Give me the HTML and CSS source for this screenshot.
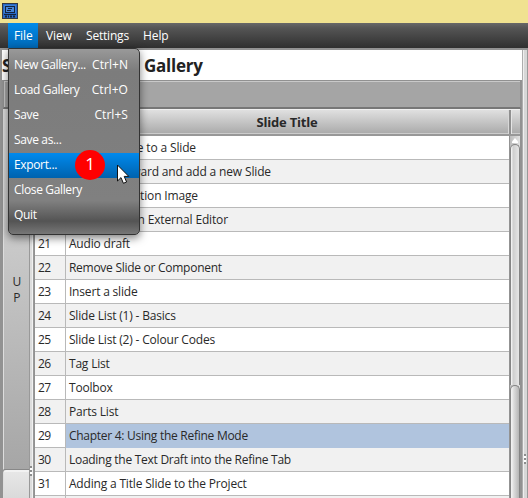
FILE: index.html
```html
<!DOCTYPE html>
<html lang="en">
<head>
<meta charset="utf-8">
<title>Slide Gallery</title>
<link rel="stylesheet" href="styles.css">
</head>
<body>
<div class="window">
  <header class="titlebar">
    <svg class="app-icon" width="16" height="16" viewBox="0 0 16 16">
      <rect width="16" height="16" fill="#34383f"/>
      <rect x="1" y="1" width="14" height="14" fill="#2868c4"/>
      <rect x="2" y="2" width="12" height="8" fill="#3f80d4"/>
      <rect x="3.5" y="3.5" width="9" height="6" fill="#4584d8" stroke="#14233d"/>
      <path d="M6 5.5h4M5 7.5h4M2 11.5h12" stroke="#14233d"/>
      <path d="M3 13.5h2m1 0h1m1 0h2m1 0h2" stroke="#14233d" stroke-width="2"/>
    </svg>
  </header>
  <nav class="menubar">
    <span class="menu-title open">File</span><span class="menu-title m-view">View</span><span class="menu-title m-settings">Settings</span><span class="menu-title">Help</span>
  </nav>
  <main class="workspace">
    <section class="content">
      <h1><span class="initial">S</span><span>Gallery</span></h1>
      <div class="toolbar"></div>
      <div class="body">
        <aside class="tabs">
          <div class="tab tab-up"><span>U<br>P</span></div>
          <div class="tab tab-next"></div>
        </aside>
        <div class="splitter"><i class="grip"></i></div>
        <div class="table">
          <div class="table-head"><div class="head-number"></div><div class="head-title">Slide Title</div><div class="head-corner"></div></div>
          <div class="table-body">
            <div class="rows">
              <div class="row"><b></b><p><span class="end w17">e to a Slide</span></p></div>
              <div class="row"><b></b><p><span class="end w18">ward and add a new Slide</span></p></div>
              <div class="row"><b></b><p><span class="end w19">ption Image</span></p></div>
              <div class="row"><b></b><p><span class="end w20">n External Editor</span></p></div>
              <div class="row"><b>21</b><p>Audio draft</p></div>
              <div class="row"><b>22</b><p class="tight">Remove Slide or Component</p></div>
              <div class="row"><b>23</b><p>Insert a slide</p></div>
              <div class="row"><b>24</b><p>Slide List (1) - Basics</p></div>
              <div class="row"><b>25</b><p>Slide List (2) - Colour Codes</p></div>
              <div class="row"><b>26</b><p>Tag List</p></div>
              <div class="row"><b>27</b><p>Toolbox</p></div>
              <div class="row"><b>28</b><p>Parts List</p></div>
              <div class="row selected"><b>29</b><p class="tight">Chapter 4: Using the Refine Mode</p></div>
              <div class="row"><b>30</b><p class="tight">Loading the Text Draft into the Refine Tab</p></div>
              <div class="row"><b>31</b><p>Adding a Title Slide to the Project</p></div>
              <div class="row"><b></b><p></p></div>
            </div>
            <div class="scrollbar">
              <div class="arrow"><svg width="10" height="9" viewBox="0 0 10 9"><path d="M5 2L8 5.5V7H2V5.5Z" fill="#fff"/></svg></div>
              <div class="thumb"></div>
              <div class="thumb lower"></div>
            </div>
          </div>
        </div>
      </div>
    </section>
    <div class="right-splitter"><i class="grip"></i></div>
  </main>
  <div class="dropdown">
    <div class="item"><span>New Gallery...</span><span class="key">Ctrl+N</span></div>
    <div class="item"><span>Load Gallery</span><span class="key">Ctrl+O</span></div>
    <div class="item"><span>Save</span><span class="key">Ctrl+S</span></div>
    <div class="item"><span>Save as...</span></div>
    <div class="item active"><span>Export...</span></div>
    <div class="item"><span>Close Gallery</span></div>
    <div class="item"><span>Quit</span></div>
  </div>
  <div class="badge">1</div>
  <svg class="cursor" width="14" height="22" viewBox="0 0 14 22"><path d="M1.5 1V17L5 13.6L7.4 19.3L10.6 18L8.2 12.4H12.8Z" fill="#fff" stroke="#111" stroke-width="1"/></svg>
</div>
</body>
</html>
```

FILE: styles.css
```css
* { box-sizing: border-box; }
body { margin: 0; background: #939393; font: 12px/16px "Open Sans", "Noto Sans", sans-serif; color: #292929; overflow: hidden; }
.window { position: relative; width: 528px; height: 498px; overflow: hidden; display: flex; flex-direction: column; }
.titlebar { height: 23px; flex: none; background: #f0e290; padding: 3px 2px; }
.app-icon { display: block; }
.menubar { height: 25px; flex: none; display: flex; padding-left: 8px; background: linear-gradient(#686868, #555 20%, #303030); color: #fff; line-height: 26px; letter-spacing: -.1px; }
.menu-title { padding-left: 8px; white-space: nowrap; }
.open { width: 30px; padding-left: 6px; background: linear-gradient(#008bea, #0068b5); }
.m-view { width: 40px; }
.m-settings { width: 57px; letter-spacing: -.2px; }
.workspace { flex: 1; min-height: 0; display: flex; padding-top: 2px; }
.content { width: 522px; display: flex; flex-direction: column; }
h1 { margin: 0 0 0 2px; height: 30px; flex: none; display: flex; background: #fff; font-size: 17px; line-height: 32px; letter-spacing: -.25px; color: #222; }
.initial { width: 142px; }
.toolbar { height: 29px; flex: none; margin: 0 1px 0 3px; background: #a5a5a5; border: 1px solid #919191; border-bottom: 2px solid #777; box-shadow: inset 1px 1px #c9c9c9; }
.body { flex: 1; min-height: 0; display: flex; padding: 0 2px 0 3px; background: #929292; }
.tabs { width: 26px; display: flex; flex-direction: column; }
.tab { border-left: 1px solid #ddd; }
.tab-up { height: 361px; border-top: 1px solid #ddd; border-bottom: 1px solid #888; background: linear-gradient(#dedede, #a6a6a6); padding: 164px 0 0 1px; text-align: center; }
.tab-next { flex: 1; background: linear-gradient(#e7e7e7, #dadada); border-top: 2px solid #f2f2f2; border-radius: 3px 0 0; }
.splitter { width: 5px; background: linear-gradient(90deg, #999 0 20%, #ddd 20% 60%, #f1f1f1 60% 80%, #999 80%); display: flex; align-items: flex-end; padding: 0 0 22px 1px; }
.grip { width: 2px; height: 10px; background: repeating-linear-gradient(#8c8c8c 0 2px, #fff 2px 4px); }
.table { width: 486px; margin-left: 1px; display: flex; flex-direction: column; overflow: hidden; }
.table-head { height: 27px; flex: none; display: flex; border-top: 1px solid #f0f0f0; border-bottom: 2px solid #989898; background: linear-gradient(#e0e0e0, #a9a9a9); font-size: 13px; font-weight: 700; line-height: 25px; letter-spacing: -.2px; box-shadow: inset 0 -1px #ccc; }
.head-number { width: 31px; border-right: 1px solid #999; }
.head-title { width: 443px; text-align: center; border-right: 1px solid #d8d8d8; }
.head-corner { flex: 1; border-left: 2px solid #909090; box-shadow: inset 1px 0 #e5e5e5; }
.table-body { display: flex; }
.rows { width: 474px; flex: none; }
.row { height: 24px; display: flex; background: #fff; border-bottom: 1px solid #b9b9b9; line-height: 24px; }
.row:nth-child(even) { background: #f1f1f1; }
.row b { width: 31px; flex: none; padding-left: 3px; border-right: 1px solid #b9b9b9; font-weight: 400; letter-spacing: -.5px; }
.row p { margin: 0; flex: 1; padding-left: 3px; white-space: nowrap; letter-spacing: -.18px; }
.row .tight { letter-spacing: -.27px; }
.row.selected p { height: 24px; background: #b0c4de; }
.end { display: block; text-align: right; letter-spacing: -.15px; }
.w17 { width: 127px; }
.w18 { width: 202px; }
.w19 { width: 129px; }
.w20 { width: 159px; }
.scrollbar { flex: 1; height: 390px; border-left: 1px solid #939393; background: linear-gradient(90deg, #bcbcbc, #e2e2e2); border-right: 1px solid #999; }
.arrow { height: 8px; }
.arrow svg { display: block; }
.thumb { height: 241px; border: 1px solid #858585; border-radius: 5px 5px 0 0; background: linear-gradient(90deg, #f1f1f1 12%, #e2e2e2 25%, #b5b5b5); border-bottom: 0; }
.thumb:not(.lower) { background: linear-gradient(90deg, #f1f1f1 10%, #cecece 25%, #e6e6e6); }
.right-splitter { flex: 1; background: linear-gradient(90deg, #adadad 0 17%, #efefef 17% 38%, #d7d7d7 38% 83%, #999 83%); display: flex; align-items: flex-end; padding: 0 0 34px 2px; }
.dropdown { position: absolute; left: 8px; top: 48px; width: 132px; height: 187px; padding: 4px 0; border: 1px solid #333; border-radius: 1px 5px 5px 5px; color: #fff; background: linear-gradient(#999, #7c7c7c 12%, #808080 82%, #545454 93%, #777); box-shadow: 0 3px 9px rgba(0,0,0,.5); }
.item { height: 25px; padding: 0 11px 0 5px; display: flex; justify-content: space-between; line-height: 24px; white-space: nowrap; letter-spacing: -.35px; }
.key { letter-spacing: .05px; }
.active { background: linear-gradient(#008aed, #0062ae); }
.badge { position: absolute; left: 75px; top: 150px; width: 30px; height: 30px; border-radius: 50%; background: #f00; color: #fff; text-align: center; font-size: 17px; line-height: 28px; }
.cursor { position: absolute; left: 116px; top: 164px; }
```
